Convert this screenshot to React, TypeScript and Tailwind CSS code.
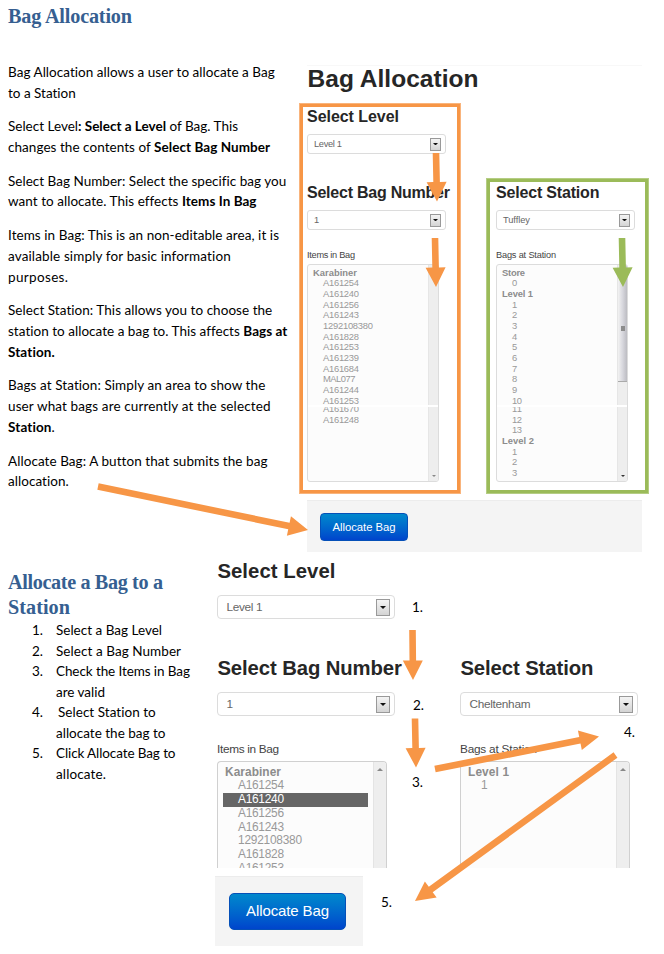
import { useLayoutEffect, useRef, type ReactNode } from "react";

/* A run of text whose tracking is adjusted so that it fills the given width. */
function Fit({ w, children, className = "" }: { w: number; children: ReactNode; className?: string }) {
  const ref = useRef<HTMLSpanElement>(null);
  useLayoutEffect(() => {
    const el = ref.current;
    if (!el) return;
    el.style.letterSpacing = "0px";
    const natural = el.getBoundingClientRect().width;
    const count = (el.textContent ?? "").length;
    if (count > 1) el.style.letterSpacing = `${(w - natural) / (count - 1)}px`;
  }, [w]);
  return (
    <span ref={ref} className={`inline-block whitespace-pre ${className}`}>
      {children}
    </span>
  );
}

type Line = [number, ReactNode];

const paragraphs: Line[][] = [
  [[267, "Bag Allocation allows a user to allocate a Bag"], [68, "to a Station"]],
  [
    [230, <>Select Level<b>: Select a Level</b> of Bag. This</>],
    [262, <>changes the contents of <b>Select Bag Number</b></>],
  ],
  [
    [278, "Select Bag Number: Select the specific bag you"],
    [248, <>want to allocate. This effects <b>Items In Bag</b></>],
  ],
  [
    [271, "Items in Bag: This is an non-editable area, it is"],
    [223, "available simply for basic information"],
    [60, "purposes."],
  ],
  [
    [264.5, "Select Station: This allows you to choose the"],
    [279, <>station to allocate a bag to. This affects <b>Bags at</b></>],
    [47, <b>Station.</b>],
  ],
  [
    [257.5, "Bags at Station: Simply an area to show the"],
    [262.5, "user what bags are currently at the selected"],
    [47, <><b>Station</b>.</>],
  ],
  [[259, "Allocate Bag: A button that submits the bag"], [61, "allocation."]],
];

const steps: Line[][] = [
  [[106, "Select a Bag Level"]],
  [[125, "Select a Bag Number"]],
  [[134, "Check the Items in Bag"], [49, "are valid"]],
  [[98, "Select Station to"], [109.5, "allocate the bag to"]],
  [[119.5, "Click Allocate Bag to"], [50, "allocate."]],
];

function Select({ text, w, large = false }: { text: string; w: number; large?: boolean }) {
  return (
    <div
      className={`flex items-center justify-between border border-[#dcdcdc] bg-white text-[#666] ${
        large ? "h-6 w-[178px] rounded-[4px] pr-[4px] pl-[8.5px] text-[11.8px]" : "h-[20px] w-[139px] rounded-[3px] pr-[4px] pl-[6px] text-[9.3px]"
      }`}
    >
      <Fit w={w} className="mt-px">{text}</Fit>
      <span
        className={`flex items-center justify-center border border-[#999] bg-linear-to-b from-[#f4f4f4] to-[#d4d4d4] ${
          large ? "h-[17px] w-[14px]" : "h-[13px] w-[11px]"
        }`}
      >
        <svg className={large ? "w-[6px]" : "w-[5px]"} viewBox="0 0 6 3">
          <path d="M0 0H6L3 3Z" fill="#111" />
        </svg>
      </span>
    </div>
  );
}

function SmallHeading({ w, children }: { w: number; children: string }) {
  return (
    <h3 className="h-[19px] text-[16px] leading-[19px] font-bold text-[#262626]">
      <Fit w={w}>{children}</Fit>
    </h3>
  );
}

function LargeHeading({ w, children }: { w: number; children: string }) {
  return (
    <h3 className="h-6 pl-[0.4px] text-[20.3px] leading-6 font-bold text-[#262626]">
      <Fit w={w}>{children}</Fit>
    </h3>
  );
}

function Row({ text, bold, w }: { text: string; bold?: boolean; w: number }) {
  return (
    <li className={`h-[10.68px] leading-[10.68px] ${bold ? "pl-[5px] font-bold text-[#8c8c8c]" : "pl-[15px]"}`}>
      <Fit w={w}>{text}</Fit>
    </li>
  );
}

const itemWidth = (t: string) => (t.length === 10 ? 50 : t === "MAL077" ? 32.5 : 36);

const itemsTop = ["A161254", "A161240", "A161256", "A161243", "1292108380", "A161828", "A161253", "A161239", "A161684", "MAL077", "A161244", "A161253"];
const itemsBottom = ["A161670", "A161248"];

function ListBox({ top, bottom, thumb }: { top: ReactNode; bottom: ReactNode; thumb?: boolean }) {
  return (
    <div className="relative flex h-[218px] w-[132px] overflow-hidden rounded-[3px] border border-[#dcdcdc] bg-[#fcfcfc] text-[9.4px] text-[#999]">
      <div className="flex flex-1 flex-col">
        <ul className="h-[140px] overflow-hidden pt-[2.5px]">{top}</ul>
        <ul className="-mt-px flex-1 overflow-hidden">{bottom}</ul>
      </div>
      <div className="flex w-[10px] flex-col items-center justify-between border-l border-[#e6e6e6] bg-[#eee]">
        <div className={thumb ? "h-[117px] w-full border-b border-[#aaa] bg-linear-to-r from-[#f2f2f2] via-[#d8d8de] to-[#bcbcc2]" : ""}>
          {thumb && <div className="mx-auto mt-[61px] h-[5px] w-[4px] bg-[#8c8c8c]" />}
        </div>
        <svg className="mb-[4px] w-[4px]" viewBox="0 0 6 3">
          <path d="M0 0H6L3 3Z" fill={thumb ? "#333" : "#888"} />
        </svg>
      </div>
      <div className="absolute top-[140px] left-0 h-[2px] w-full bg-white" />
    </div>
  );
}

function TallList({ children }: { children: ReactNode }) {
  return (
    <div className="flex h-[107px] w-[170px] overflow-hidden rounded-t-[4px] border-x border-t border-[#d0d0d0] bg-[#fcfcfc] text-[11.9px] text-[#999]">
      <ul className="flex-1 pt-[3.7px] pl-[5px] leading-[13.75px]">{children}</ul>
      <div className="flex w-[13px] justify-center border-l border-[#e4e4e4] bg-[#eee] pt-[6px]">
        <svg className="h-[3px] w-[6px]" viewBox="0 0 6 3">
          <path d="M0 3H6L3 0Z" fill="#888" />
        </svg>
      </div>
    </div>
  );
}

function Arrow({ x1, y1, x2, y2, color = "#f79646" }: { x1: number; y1: number; x2: number; y2: number; color?: string }) {
  const len = Math.hypot(x2 - x1, y2 - y1);
  const angle = (Math.atan2(y2 - y1, x2 - x1) * 180) / Math.PI;
  const neck = len - 19.5;
  return (
    <polygon
      transform={`translate(${x1} ${y1}) rotate(${angle})`}
      points={`0,-3.3 ${neck},-3.3 ${neck},-10 ${len},0 ${neck},10 ${neck},3.3 0,3.3`}
      fill={color}
    />
  );
}

const serif = "font-['Liberation_Serif',serif] font-bold text-[#365f91]";
const marker = "absolute text-[13.5px] leading-5 text-black";

export default function App() {
  return (
    <main className="relative h-[954px] w-[664px] overflow-hidden bg-white font-['Lato',sans-serif] text-black">
      <section className="h-[556px]">
        <h1 className={`h-[28px] pt-1 pl-2 text-[20.2px] leading-6 ${serif}`}>
          <Fit w={124}>Bag Allocation</Fit>
        </h1>
        <div className="flex">
          <div className="w-[299px] shrink-0 pt-[33.8px] pl-2 text-[13.5px] leading-[20.8px]">
            {paragraphs.map((lines, i) => (
              <p key={i} className="mb-[12.8px]">
                {lines.map(([w, text], j) => (
                  <span key={j} className="block h-[20.8px]">
                    <Fit w={w}>{text}</Fit>
                  </span>
                ))}
              </p>
            ))}
          </div>

          <div className="pt-[37px] font-['Liberation_Sans',Arial,sans-serif]">
            <h2 className="ml-2 h-[38px] w-[335px] border-t border-[#f8f8f8] pl-[0.5px] text-[24.5px] leading-[26px] font-bold text-[#262626]">
              <Fit w={171}>Bag Allocation</Fit>
            </h2>
            <div className="flex items-end gap-[27px] pt-px pl-px">
              <div className="h-[389px] w-[160px] border-[3px] border-[#f79646] pl-[4px] shadow-[0_0_0_1px_#f9b47c]">
                <SmallHeading w={92}>Select Level</SmallHeading>
                <div className="mt-[8px]">
                  <Select text="Level 1" w={28} />
                </div>
                <div className="mt-[29px]">
                  <SmallHeading w={143}>Select Bag Number</SmallHeading>
                </div>
                <div className="mt-[8px]">
                  <Select text="1" w={5} />
                </div>
                <p className="mt-[19px] h-[15px] text-[9.2px] leading-[13px] text-[#444]">
                  <Fit w={48}>Items in Bag</Fit>
                </p>
                <ListBox
                  top={
                    <>
                      <Row text="Karabiner" bold w={44} />
                      {itemsTop.map((t, i) => <Row key={i} text={t} w={itemWidth(t)} />)}
                    </>
                  }
                  bottom={itemsBottom.map((t) => <Row key={t} text={t} w={itemWidth(t)} />)}
                />
              </div>
              <div className="h-[314px] w-[161px] border-[3px] border-[#9bbb59] pt-px pl-[6px] shadow-[0_0_0_1px_#b5cd84]">
                <SmallHeading w={103.5}>Select Station</SmallHeading>
                <div className="mt-[8px]">
                  <Select text="Tuffley" w={27} />
                </div>
                <p className="mt-[19px] h-[15px] text-[9.2px] leading-[13px] text-[#444]">
                  <Fit w={60}>Bags at Station</Fit>
                </p>
                <ListBox
                  thumb
                  top={
                    <>
                      <Row text="Store" bold w={23} />
                      <Row text="0" w={5} />
                      <Row text="Level 1" bold w={31} />
                      {["1", "2", "3", "4", "5", "6", "7", "8", "9"].map((t) => <Row key={t} text={t} w={5} />)}
                      <Row text="10" w={10} />
                    </>
                  }
                  bottom={
                    <>
                      {["11", "12", "13"].map((t) => <Row key={t} text={t} w={10} />)}
                      <Row text="Level 2" bold w={32} />
                      {["1", "2", "3"].map((t) => <Row key={t} text={t} w={5} />)}
                    </>
                  }
                />
              </div>
            </div>
            <div className="mt-[7px] ml-2 h-[52px] w-[335px] border-t border-[#ececec] bg-[#f4f4f4] pt-[12px] pl-[13px]">
              <button className="h-[28px] w-[88px] rounded-[4px] border border-[#0550b8] bg-linear-to-b from-[#0088cc] to-[#0044cc] text-[11.3px] text-white">
                <Fit w={63}>Allocate Bag</Fit>
              </button>
            </div>
          </div>
        </div>
      </section>

      <section className="flex">
        <div className="w-[215px] shrink-0 pt-[14px] pl-2">
          <h2 className={`text-[20.2px] leading-[25px] ${serif}`}>
            <Fit w={155}>Allocate a Bag to a</Fit>
            <br />
            <Fit w={62}>Station</Fit>
          </h2>
          <ol className="pl-6 text-[13.5px] leading-[20.5px]">
            {steps.map((lines, i) => (
              <li key={i} className="flex">
                <span className="w-6">{i + 1}.</span>
                <div>
                  {lines.map(([w, text], j) => (
                    <div key={j} className={`h-[20.5px] ${i === 3 && j === 0 ? "pl-[2px]" : ""}`}>
                      <Fit w={w}>{text}</Fit>
                    </div>
                  ))}
                </div>
              </li>
            ))}
          </ol>
        </div>

        <div className="pt-[3px] font-['Liberation_Sans',Arial,sans-serif]">
          <div className="ml-[2px] flex h-[309px] gap-[65px]">
            <div className="w-[178px]">
              <LargeHeading w={118}>Select Level</LargeHeading>
              <div className="mt-[12px]">
                <Select text="Level 1" w={36} large />
              </div>
              <div className="mt-[37px]">
                <LargeHeading w={184.5}>Select Bag Number</LargeHeading>
              </div>
              <div className="mt-[12px]">
                <Select text="1" w={6} large />
              </div>
              <p className="mt-[25px] mb-[4px] h-4 text-[11.8px] leading-4 text-[#444]">
                <Fit w={62}>Items in Bag</Fit>
              </p>
              <TallList>
                <li className="pl-[2px] font-bold text-[#8c8c8c]"><Fit w={56}>Karabiner</Fit></li>
                {["A161254", "A161240", "A161256", "A161243", "1292108380", "A161828", "A161253"].map((t, i) => (
                  <li key={i} className={`w-[145px] pl-[15px] ${i === 1 ? "bg-[#666] text-white" : ""}`}>
                    <Fit w={t.length === 10 ? 64 : 46}>{t}</Fit>
                  </li>
                ))}
              </TallList>
            </div>
            <div className="w-[178px] pt-[97px]">
              <LargeHeading w={133}>Select Station</LargeHeading>
              <div className="mt-[12px]">
                <Select text="Cheltenham" w={61} large />
              </div>
              <p className="mt-[25px] mb-[4px] h-4 text-[11.8px] leading-4 text-[#444]">
                <Fit w={77}>Bags at Station</Fit>
              </p>
              <TallList>
                <li className="pl-[2px] font-bold text-[#8c8c8c]"><Fit w={41}>Level 1</Fit></li>
                <li className="pl-[15px]">1</li>
              </TallList>
            </div>
          </div>
          <div className="mt-[8px] h-[70px] w-[148px] border-t border-[#ececec] bg-[#f4f4f4] pt-[16px] pl-[14px]">
            <button className="h-[37px] w-[117px] rounded-[5px] border border-[#0550b8] bg-linear-to-b from-[#0088cc] to-[#0044cc] text-[15px] text-white">
              <Fit w={83}>Allocate Bag</Fit>
            </button>
          </div>
        </div>
      </section>

      <span className={`${marker} top-[597px] left-[412px]`}>1.</span>
      <span className={`${marker} top-[695px] left-[413px]`}>2.</span>
      <span className={`${marker} top-[772px] left-[412px]`}>3.</span>
      <span className={`${marker} top-[722px] left-[624px]`}>4.</span>
      <span className={`${marker} top-[892px] left-[381px]`}>5.</span>

      <svg className="pointer-events-none absolute inset-0" width="664" height="954" viewBox="0 0 664 954">
        <Arrow x1={436} y1={153} x2={437} y2={201.5} />
        <Arrow x1={435} y1={238} x2={436} y2={287} />
        <Arrow x1={622} y1={238} x2={623} y2={287} color="#9bbb59" />
        <Arrow x1={98} y1={486.5} x2={308} y2={530} />
        <Arrow x1={412.5} y1={630} x2={413} y2={680} />
        <Arrow x1={415} y1={718.5} x2={416} y2={767.5} />
        <Arrow x1={435} y1={769} x2={599} y2={736.5} />
        <Arrow x1={615.5} y1={755} x2={415} y2={901} />
      </svg>
    </main>
  );
}
